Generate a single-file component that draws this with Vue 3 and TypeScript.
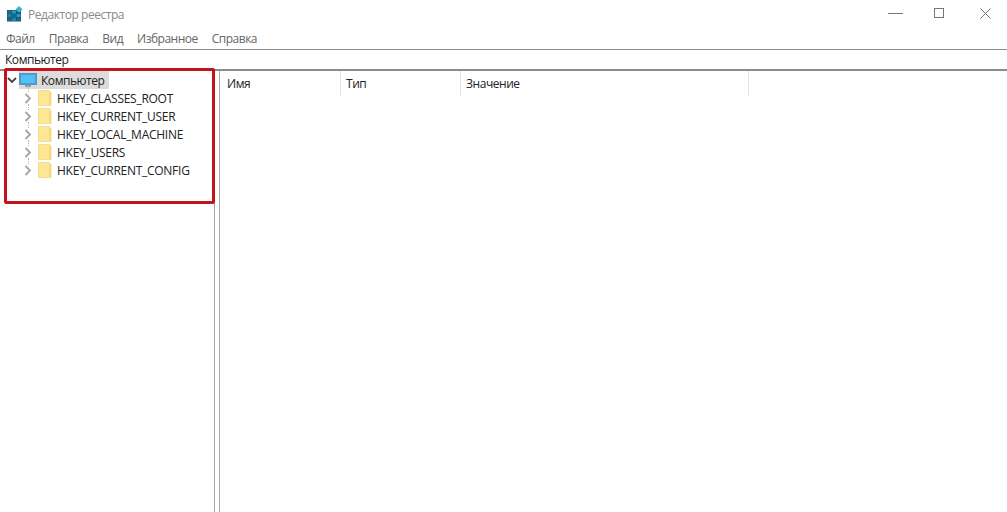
<template>
  <div class="window">
    <header class="titlebar">
      <svg class="app-icon" width="16" height="16" viewBox="0 0 16 16">
        <rect x="0" y="4" width="14" height="11.500" fill="#12506e" />
        <rect x="0.500" y="4.500" width="4" height="3" fill="#1c6f94" />
        <rect x="5" y="4.500" width="4" height="3" fill="#1ea0c4" />
        <rect x="0.500" y="8" width="4" height="3" fill="#1c86ab" />
        <rect x="5" y="8" width="4" height="3" fill="#17698c" />
        <rect x="9.500" y="8" width="4" height="3" fill="#1ea0c4" />
        <rect x="0.500" y="11.500" width="4" height="3.500" fill="#17698c" />
        <rect x="5" y="11.500" width="4" height="3.500" fill="#1c86ab" />
        <rect x="9.500" y="11.500" width="4" height="3.500" fill="#17698c" />
        <path d="M12 0l3.500 3.500L12 7 8.500 3.500z" fill="#35b4cf" />
      </svg>
      <span class="title">Редактор реестра</span>
      <div class="controls">
        <svg class="ctl-min" width="15" height="10" viewBox="0 0 15 10"><path d="M0 5.500h15" stroke="#777" /></svg>
        <svg class="ctl-max" width="10" height="10" viewBox="0 0 10 10"><rect x="0.500" y="0.500" width="9" height="9" fill="none" stroke="#777" /></svg>
        <svg class="ctl-close" width="11" height="11" viewBox="0 0 11 11"><path d="M0.500 0.500l10 10M10.500 0.500l-10 10" stroke="#777" /></svg>
      </div>
    </header>

    <nav class="menu">
      <span v-for="item in menu" :key="item">{{ item }}</span>
    </nav>

    <div class="address">Компьютер</div>

    <main class="content">
      <aside class="tree">
        <div class="root-row">
          <svg class="chevron" width="10" height="10" viewBox="0 0 10 10">
            <path d="M1 3l4 4 4-4" fill="none" stroke="#444" stroke-width="1.800" />
          </svg>
          <span class="root-label">
            <svg width="18" height="16" viewBox="0 0 18 16">
              <rect x="0.500" y="1.500" width="17" height="11" fill="#3ba4e6" stroke="#6a8fa8" />
              <rect x="2" y="3" width="14" height="8" fill="#54c0f2" />
              <path d="M6 14h6" stroke="#8aa0b0" stroke-width="2" />
            </svg>
            Компьютер
          </span>
        </div>
        <div v-for="key in hives" :key="key" class="hive-row">
          <svg class="chevron" width="8" height="11" viewBox="0 0 8 11">
            <path d="M1.500 1l4.500 4.500-4.500 4.500" fill="none" stroke="#a4a4a4" stroke-width="1.800" />
          </svg>
          <svg class="folder" width="14" height="16" viewBox="0 0 14 16">
            <path d="M0.500 0.500h11l1.500 2v13h-12.500z" fill="#fde792" stroke="#f5dc92" />
            <path d="M11 1l2 2v12h-2z" fill="#f8d97e" />
          </svg>
          <span class="hive-label">{{ key }}</span>
        </div>
        <div class="highlight"></div>
      </aside>

      <section class="list">
        <div class="list-head">
          <span v-for="col in columns" :key="col">{{ col }}</span>
        </div>
      </section>
    </main>
  </div>
</template>

<script setup lang="ts">
const menu: string[] = ["Файл", "Правка", "Вид", "Избранное", "Справка"];
const hives: string[] = [
  "HKEY_CLASSES_ROOT",
  "HKEY_CURRENT_USER",
  "HKEY_LOCAL_MACHINE",
  "HKEY_USERS",
  "HKEY_CURRENT_CONFIG",
];
const columns: string[] = ["Имя", "Тип", "Значение"];
</script>

<style>
html,
body {
  background: #fff;
  overflow: hidden;
}
</style>

<style scoped>
.window {
  width: 1007px;
  height: 512px;
  display: flex;
  flex-direction: column;
  font-family: "Open Sans", "Noto Sans", sans-serif;
  font-size: 12px;
  letter-spacing: -0.45px;
  color: #222;
}

.titlebar {
  height: 28px;
  display: flex;
  align-items: center;
  padding-left: 7px;
  flex: none;
}

.app-icon {
  margin-right: 5px;
}

.title {
  color: #8a8a8a;
}

.controls {
  margin-left: auto;
  display: flex;
  padding-right: 16px;
  margin-bottom: 2px;
}

.ctl-max {
  margin-left: 31px;
}

.ctl-close {
  margin-left: 36px;
}

.menu {
  height: 21px;
  display: flex;
  align-items: center;
  gap: 14px;
  padding-left: 6px;
  color: #666;
  flex: none;
  letter-spacing: -0.5px;
}

.address {
  height: 20px;
  border-top: 1px solid #8c8c8c;
  line-height: 19px;
  padding-left: 5px;
  flex: none;
  box-sizing: border-box;
}

.content {
  flex: 1;
  display: flex;
  border-top: 2px solid #8c8c8c;
}

.tree {
  width: 215px;
  flex: none;
  box-sizing: border-box;
  border-right: 1px solid #a8a8a8;
  padding: 0 0 0 7px;
  position: relative;
}

.root-row {
  height: 18px;
  display: flex;
  align-items: center;
}

.root-label {
  display: flex;
  align-items: center;
  gap: 4px;
  height: 18px;
  margin-left: 2px;
  padding-right: 4px;
  background: #dcdcdc;
}

.hive-row {
  height: 18px;
  display: flex;
  align-items: center;
  padding-left: 17px;
  letter-spacing: -0.27px;
  position: relative;
}

/* faint dotted connector between the expanders */
.hive-row::before {
  content: "";
  position: absolute;
  left: 21px;
  top: -3px;
  height: 6px;
  border-left: 1px dotted #b4b4b4;
}

.folder {
  margin-left: 6px;
  margin-right: 5px;
}

.hive-label {
  white-space: nowrap;
}

/* red annotation frame over the tree */
.highlight {
  position: absolute;
  left: 4px;
  top: -3px;
  width: 211px;
  height: 136px;
  box-sizing: border-box;
  border: 3px solid #c0151e;
  border-radius: 2px;
}

.list {
  flex: 1;
  margin-left: 4px;
  border-left: 1px solid #a8a8a8;
}

.list-head {
  display: flex;
  height: 25px;
  width: 528px;
  border-right: 1px solid #e2e2e2;
}

.list-head span {
  width: 120px;
  box-sizing: border-box;
  padding-left: 5px;
  line-height: 26px;
  border-right: 1px solid #e2e2e2;
}

.list-head span:first-child {
  width: 121px;
  padding-left: 7px;
}

.list-head span:last-child {
  flex: 1;
  border-right: 0;
}
</style>
